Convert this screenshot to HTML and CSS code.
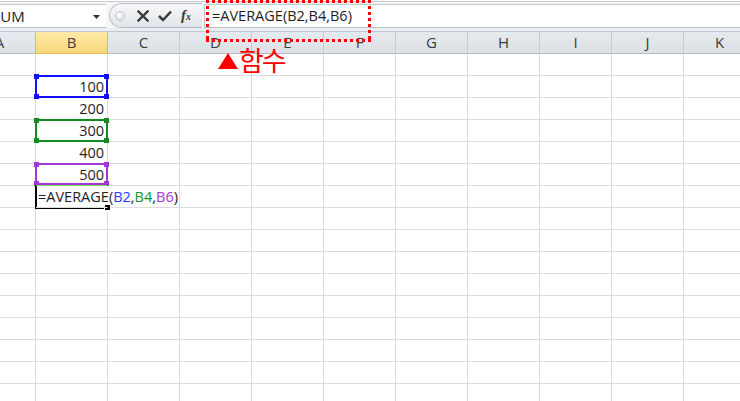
FILE: index.html
```html
<!DOCTYPE html>
<html lang="ko">
<head>
<meta charset="utf-8">
<link rel="stylesheet" href="styles.css">
</head>
<body>
<div class="app">
  <div class="toolbar">
    <div class="namebox">
      <span class="nametext">SUM</span>
      <svg class="drop" width="7" height="4" viewBox="0 0 7 4"><polygon points="0,0 7,0 3.5,4" fill="#333"/></svg>
    </div>
    <div class="buttons">
      <span class="circle"></span>
      <svg class="ico" width="12" height="12" viewBox="0 0 12 12"><path d="M1.5 1.5 L10.5 10.5 M10.5 1.5 L1.5 10.5" stroke="#3a3a3a" stroke-width="2.4" stroke-linecap="square"/></svg>
      <svg class="ico" width="14" height="12" viewBox="0 0 14 12"><path d="M1 6 L5 10 L13 1.5" stroke="#3a3a3a" stroke-width="2.5" fill="none"/></svg>
      <span class="fx">f<span class="fxsub">x</span></span>
    </div>
    <div class="formula">=AVERAGE(B2,B4,B6)</div>
  </div>
  <div class="strip"></div>
  <div class="sheet">
    <div class="grid">
      <div class="hd">A</div><div class="hd sel">B</div><div class="hd">C</div><div class="hd">D</div><div class="hd">E</div><div class="hd">F</div><div class="hd">G</div><div class="hd">H</div><div class="hd">I</div><div class="hd">J</div><div class="hd">K</div>

      <div class="c"></div><div class="c"></div><div class="c"></div><div class="c"></div><div class="c"></div><div class="c"></div><div class="c"></div><div class="c"></div><div class="c"></div><div class="c"></div><div class="c"></div>
      <div class="c"></div><div class="c num">100</div><div class="c"></div><div class="c"></div><div class="c"></div><div class="c"></div><div class="c"></div><div class="c"></div><div class="c"></div><div class="c"></div><div class="c"></div>
      <div class="c"></div><div class="c num">200</div><div class="c"></div><div class="c"></div><div class="c"></div><div class="c"></div><div class="c"></div><div class="c"></div><div class="c"></div><div class="c"></div><div class="c"></div>
      <div class="c"></div><div class="c num">300</div><div class="c"></div><div class="c"></div><div class="c"></div><div class="c"></div><div class="c"></div><div class="c"></div><div class="c"></div><div class="c"></div><div class="c"></div>
      <div class="c"></div><div class="c num">400</div><div class="c"></div><div class="c"></div><div class="c"></div><div class="c"></div><div class="c"></div><div class="c"></div><div class="c"></div><div class="c"></div><div class="c"></div>
      <div class="c"></div><div class="c num">500</div><div class="c"></div><div class="c"></div><div class="c"></div><div class="c"></div><div class="c"></div><div class="c"></div><div class="c"></div><div class="c"></div><div class="c"></div>
      <div class="c"></div><div class="c txt open">=AVERAGE(<span class="rb">B2</span>,<span class="rg">B4</span>,<span class="rp">B6</span>)</div><div class="c"></div><div class="c"></div><div class="c"></div><div class="c"></div><div class="c"></div><div class="c"></div><div class="c"></div><div class="c"></div><div class="c"></div>
      <div class="c"></div><div class="c"></div><div class="c"></div><div class="c"></div><div class="c"></div><div class="c"></div><div class="c"></div><div class="c"></div><div class="c"></div><div class="c"></div><div class="c"></div>
      <div class="c"></div><div class="c"></div><div class="c"></div><div class="c"></div><div class="c"></div><div class="c"></div><div class="c"></div><div class="c"></div><div class="c"></div><div class="c"></div><div class="c"></div>
      <div class="c"></div><div class="c"></div><div class="c"></div><div class="c"></div><div class="c"></div><div class="c"></div><div class="c"></div><div class="c"></div><div class="c"></div><div class="c"></div><div class="c"></div>
      <div class="c"></div><div class="c"></div><div class="c"></div><div class="c"></div><div class="c"></div><div class="c"></div><div class="c"></div><div class="c"></div><div class="c"></div><div class="c"></div><div class="c"></div>
      <div class="c"></div><div class="c"></div><div class="c"></div><div class="c"></div><div class="c"></div><div class="c"></div><div class="c"></div><div class="c"></div><div class="c"></div><div class="c"></div><div class="c"></div>
      <div class="c"></div><div class="c"></div><div class="c"></div><div class="c"></div><div class="c"></div><div class="c"></div><div class="c"></div><div class="c"></div><div class="c"></div><div class="c"></div><div class="c"></div>
      <div class="c"></div><div class="c"></div><div class="c"></div><div class="c"></div><div class="c"></div><div class="c"></div><div class="c"></div><div class="c"></div><div class="c"></div><div class="c"></div><div class="c"></div>
      <div class="c"></div><div class="c"></div><div class="c"></div><div class="c"></div><div class="c"></div><div class="c"></div><div class="c"></div><div class="c"></div><div class="c"></div><div class="c"></div><div class="c"></div>
      <div class="c"></div><div class="c"></div><div class="c"></div><div class="c"></div><div class="c"></div><div class="c"></div><div class="c"></div><div class="c"></div><div class="c"></div><div class="c"></div><div class="c"></div>
    </div>
  </div>

  <div class="range blue r2"><i class="h tl"></i><i class="h tr"></i><i class="h bl"></i><i class="h br"></i></div>
  <div class="range green r4"><i class="h tl"></i><i class="h tr"></i><i class="h bl"></i><i class="h br"></i></div>
  <div class="range purple r6"><i class="h tl"></i><i class="h tr"></i><i class="h bl"></i><i class="h br"></i></div>
  <div class="active"><i class="fill"></i></div>

  <div class="callout"></div>
  <div class="label">
    <svg class="tri" width="20" height="16" viewBox="0 0 20 16"><polygon points="10,0 20,16 0,16" fill="#ff0000"/></svg>
    <span class="ko">함수</span>
  </div>
</div>
</body>
</html>
```

FILE: styles.css
```css
html, body {
  margin: 0;
  padding: 0;
  background: #ffffff;
}

.app {
  position: relative;
  width: 740px;
  height: 401px;
  overflow: hidden;
  font-family: "Open Sans", "Noto Sans", "Noto Sans CJK KR", sans-serif;
  color: #1e1e1e;
}

/* ---------- formula bar ---------- */
.toolbar {
  height: 28px;
  display: flex;
  align-items: flex-end;
  background: linear-gradient(#ffffff 0 1px, #c8ccd2 1px 2px, #f4f5f7 2px);
}

.namebox {
  width: 106px;
  height: 24px;
  box-sizing: border-box;
  background: #ffffff;
  border-top: 1px solid #c3c7cd;
  border-bottom: 1px solid #b9bdc4;
  display: flex;
  align-items: center;
  overflow: hidden;
  position: relative;
}

.nametext {
  font-size: 15px;
  margin-left: -8px;
  line-height: 22px;
  color: #1e1e1e;
}

.drop {
  position: absolute;
  right: 6px;
  top: 10px;
}

.buttons {
  width: 93px;
  height: 25px;
  margin-left: 3px;
  box-sizing: border-box;
  border: 1px solid #b6bbc2;
  border-right: none;
  border-radius: 13px 0 0 13px;
  background: linear-gradient(#f7f8f9, #e1e4e8);
  display: flex;
  align-items: center;
  padding-left: 5px;
}

.circle {
  width: 10px;
  height: 10px;
  box-sizing: border-box;
  border-radius: 50%;
  background: radial-gradient(circle at 40% 35%, #ffffff, #d0d3d8);
  border: 1px solid #c1c5cb;
  margin-right: 12px;
}

.ico {
  margin-right: 9px;
}

.fx {
  font-family: "Liberation Serif", "DejaVu Serif", serif;
  font-style: italic;
  font-weight: bold;
  font-size: 15px;
  color: #3a3a3a;
  line-height: 14px;
}

.fxsub {
  font-size: 10px;
}

.formula {
  flex: 1;
  height: 24px;
  margin-left: 2px;
  box-sizing: border-box;
  background: #ffffff;
  border-top: 1px solid #c3c7cd;
  border-bottom: 1px solid #b9bdc4;
  border-left: 1px solid #c3c7cd;
  font-size: 14.5px;
  line-height: 22px;
  padding-left: 7px;
  white-space: nowrap;
}

.strip {
  height: 3px;
  background: #e9ecf0;
  border-bottom: 1px solid #c3c8ce;
}

/* ---------- sheet ---------- */
.sheet {
  overflow: hidden;
}

.grid {
  display: grid;
  grid-template-columns: repeat(11, 72px);
  grid-auto-rows: 22px;
  margin-left: -36px;
  width: 792px;
}

.hd {
  box-sizing: border-box;
  background: linear-gradient(#e6e9ee, #dde1e6);
  border-right: 1px solid #c5cad1;
  border-bottom: 1px solid #b4bac2;
  text-align: center;
  font-size: 15px;
  line-height: 21px;
  color: #3c3c3c;
}

.hd.sel {
  background: linear-gradient(#fde9a6, #f9d77a);
  border-right: 1px solid #f0b552;
  border-left: 1px solid #f0b552;
  border-bottom: 1px solid #f0b552;
  margin-left: -1px;
}

.c {
  box-sizing: border-box;
  border-right: 1px solid #dadcdf;
  border-bottom: 1px solid #dadcdf;
  font-size: 14.5px;
  line-height: 21px;
  white-space: nowrap;
}

.num {
  text-align: right;
  padding-right: 3px;
}

.txt {
  padding-left: 2px;
  overflow: visible;
  position: relative;
  z-index: 1;
}

.open {
  border-right-color: transparent;
}

.rb { color: #1f3cff; }
.rg { color: #12922a; }
.rp { color: #a535d8; }

/* ---------- range highlight overlays ---------- */
.range {
  position: absolute;
  left: 35px;
  width: 73px;
  height: 23px;
  box-sizing: border-box;
  border: 2px solid;
}

.r2 { top: 75px; }
.r4 { top: 119px; }
.r6 { top: 163px; height: 22px; }

.blue { border-color: #1010ff; }
.green { border-color: #128a1e; }
.purple { border-color: #a535d8; }

.blue .h { background: #1010ff; }
.green .h { background: #128a1e; }
.purple .h { background: #a535d8; }

.h {
  position: absolute;
  width: 5px;
  height: 5px;
}

.tl { left: -3px; top: -3px; }
.tr { right: -3px; top: -3px; }
.bl { left: -3px; bottom: -3px; }
.br { right: -3px; bottom: -3px; }

.active {
  position: absolute;
  left: 35px;
  top: 185px;
  width: 72px;
  height: 24px;
  box-sizing: border-box;
  border-left: 2px solid #000000;
  border-bottom: 2px solid #000000;
  border-top: 1px solid #7bd84e;
}

.fill {
  position: absolute;
  right: -4px;
  bottom: -4px;
  width: 7px;
  height: 7px;
  box-sizing: border-box;
  background: #000000;
  border: 1px solid #ffffff;
}

/* ---------- annotation ---------- */
.callout {
  position: absolute;
  left: 206px;
  top: 0;
  width: 165px;
  height: 42px;
  background:
    repeating-linear-gradient(90deg, #ff0000 0 3px, transparent 3px 6px) left top / 100% 3px no-repeat,
    repeating-linear-gradient(90deg, #ff0000 0 3px, transparent 3px 6px) left bottom / 100% 3px no-repeat,
    repeating-linear-gradient(180deg, #ff0000 0 3px, transparent 3px 6px) left top / 3px 100% no-repeat,
    repeating-linear-gradient(180deg, #ff0000 0 3px, transparent 3px 6px) right top / 3px 100% no-repeat;
}

.label {
  position: absolute;
  left: 218px;
  top: 44px;
  display: flex;
  align-items: flex-end;
  color: #ff0000;
}

.tri {
  margin-bottom: 6px;
}

.ko {
  font-family: "Noto Sans CJK KR", "Noto Sans", sans-serif;
  font-size: 27px;
  line-height: 31px;
  letter-spacing: -2px;
  margin-left: 1px;
}
```
